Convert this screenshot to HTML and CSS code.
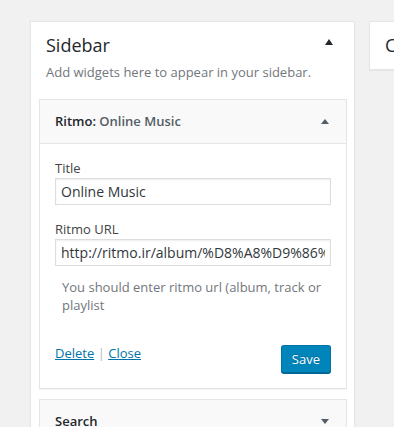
FILE: index.html
```html
<!DOCTYPE html>
<html lang="en">
<head>
  <meta charset="UTF-8">
  <title>Widgets</title>
  <link rel="stylesheet" href="styles.css">
</head>
<body>
  <div class="columns">
    <div class="sidebar">
      <div class="sidebar-name">
        <h2>Sidebar</h2>
        <span class="arrow arrow-up arrow-dark"></span>
      </div>
      <p class="sidebar-description">Add widgets here to appear in your sidebar.</p>

      <div class="widget">
        <div class="widget-top">
          <h3>Ritmo:<span class="in-widget-title"> Online Music</span></h3>
          <span class="arrow arrow-up"></span>
        </div>
        <div class="widget-inside">
          <div class="field">
            <label for="title">Title</label>
            <input type="text" id="title" value="Online Music">
          </div>
          <div class="field">
            <label for="url">Ritmo URL</label>
            <input type="text" id="url" value="http://ritmo.ir/album/%D8%A8%D9%86%D8%A7%D9%85">
          </div>
          <p class="help">You should enter ritmo url (album, track or playlist</p>
          <div class="widget-actions">
            <div class="links">
              <a href="#">Delete</a> <span class="sep">|</span> <a href="#">Close</a>
            </div>
            <button class="button-primary">Save</button>
          </div>
        </div>
      </div>

      <div class="widget">
        <div class="widget-top">
          <h3>Search</h3>
          <span class="arrow arrow-down"></span>
        </div>
      </div>
    </div>

    <div class="sidebar sidebar-closed">
      <div class="sidebar-name">
        <h2>Content Bottom 1</h2>
      </div>
    </div>
  </div>
</body>
</html>
```

FILE: styles.css
```css
body {
  margin: 0;
  background: #f1f1f1;
  font-family: "Open Sans", "Liberation Sans", sans-serif;
  font-size: 13px;
  color: #444;
  overflow: hidden;
}
.columns {
  display: flex;
  gap: 14px;
  padding: 21px 0 0 30px;
}
.sidebar {
  flex-shrink: 0;
  width: 325px;
  box-sizing: border-box;
  background: #fff;
  border: 1px solid #e5e5e5;
  box-shadow: 0 1px 1px rgba(0, 0, 0, .04);
  padding: 0 7px 0 8px;
  align-self: flex-start;
}
.sidebar-closed {
  width: 300px;
  padding: 0;
}
.sidebar-name {
  display: flex;
  justify-content: space-between;
  align-items: flex-start;
  padding: 10px 14px 0 7px;
}
.sidebar-closed .sidebar-name {
  padding: 10px 15px 11px 15px;
}
.sidebar-name h2 {
  margin: 0;
  font-size: 18px;
  font-weight: 400;
  line-height: 26px;
  color: #23282d;
  white-space: nowrap;
}
.sidebar-description {
  margin: 5px 7px 16px;
  line-height: 19.5px;
  color: #72777c;
}
.arrow {
  width: 0;
  height: 0;
  border-left: 4px solid transparent;
  border-right: 4px solid transparent;
}
.arrow-up {
  border-bottom: 5px solid #555d66;
}
.arrow-down {
  border-top: 5px solid #555d66;
}
.arrow-dark {
  border-bottom: 6px solid #23282d;
  margin-top: 7px;
}
.widget {
  border: 1px solid #e5e5e5;
  box-shadow: 0 1px 1px rgba(0, 0, 0, .04);
  margin-bottom: 10px;
  background: #fff;
}
.widget-top {
  display: flex;
  justify-content: space-between;
  align-items: center;
  background: #f9f9f9;
  padding: 0 17px 0 0;
}
.widget-top h3 {
  margin: 0;
  padding: 15px;
  font-size: 13px;
  font-weight: 600;
  line-height: 13px;
  color: #23282d;
}
.in-widget-title {
  color: #555d66;
}
.widget-inside {
  border-top: 1px solid #e5e5e5;
  padding: 15px;
}
.field {
  margin-bottom: 15px;
}
.field label {
  display: block;
  line-height: 19px;
}
.field input {
  display: block;
  width: 100%;
  height: 27px;
  box-sizing: border-box;
  margin: 0;
  padding: 3px 5px;
  border: 1px solid #ddd;
  box-shadow: inset 0 1px 2px rgba(0, 0, 0, .07);
  font-family: inherit;
  font-size: 14px;
  color: #32373c;
  background: #fff;
}
.help {
  margin: -3px 7px 31px;
  line-height: 18px;
  color: #72777c;
}
.widget-actions {
  display: flex;
  justify-content: space-between;
  align-items: flex-start;
}
.links {
  line-height: 16px;
}
.links a {
  color: #0073aa;
}
.sep {
  color: #b4b9be;
}
.button-primary {
  height: 28px;
  padding: 0 10px 1px;
  border: 1px solid #0073aa;
  border-bottom-color: #006799;
  border-radius: 3px;
  background: #0085ba;
  box-shadow: 0 1px 0 #006799;
  color: #fff;
  font-family: inherit;
  font-size: 13px;
  line-height: 26px;
  text-shadow: 0 -1px 1px #006799;
  cursor: pointer;
}
```
